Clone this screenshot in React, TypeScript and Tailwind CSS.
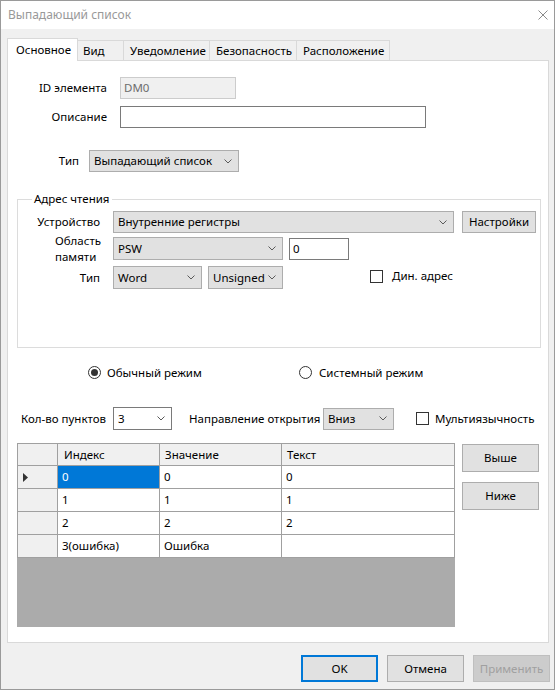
import type { ReactNode } from 'react';

function Chevron() {
  return (
    <svg width="8" height="5" viewBox="0 0 8 5" className="shrink-0">
      <path d="M0.5 0.5L4 4L7.5 0.5" fill="none" stroke="#5a5a5a" strokeWidth="1" />
    </svg>
  );
}

interface SelectProps {
  text: string;
  className: string;
  white?: boolean;
}

function Select({ text, className, white }: SelectProps) {
  return (
    <div
      className={`flex items-center justify-between pl-[4px] pr-[6px] border ${
        white ? 'bg-white border-[#7a7a7a]' : 'bg-[#e1e1e1] border-[#adadad]'
      } ${className}`}
    >
      <span className="whitespace-nowrap">{text}</span>
      <Chevron />
    </div>
  );
}

function Button({ children, className }: { children: ReactNode; className: string }) {
  return (
    <div className={`flex items-center justify-center border border-[#adadad] bg-[#e1e1e1] ${className}`}>
      {children}
    </div>
  );
}

function Checkbox() {
  return <div className="w-[13px] h-[13px] border border-[#333] bg-white shrink-0" />;
}

function Radio({ checked }: { checked?: boolean }) {
  return (
    <div className="w-[13px] h-[13px] rounded-full border border-[#333] bg-white flex items-center justify-center shrink-0">
      {checked && <div className="w-[7px] h-[7px] rounded-full bg-[#333]" />}
    </div>
  );
}

const rows = [
  { idx: '0', val: '0', txt: '0' },
  { idx: '1', val: '1', txt: '1' },
  { idx: '2', val: '2', txt: '2' },
  { idx: '3(ошибка)', val: 'Ошибка', txt: '' },
];

const tabs = [
  { name: 'Вид', w: 'w-[46px]', pl: 'pl-[5px]' },
  { name: 'Уведомление', w: 'w-[86px]', pl: 'pl-[6px]' },
  { name: 'Безопасность', w: 'w-[87px]', pl: 'pl-[6px]' },
  { name: 'Расположение', w: 'w-[93px]', pl: 'pl-[6px]' },
];

export default function App() {
  return (
    <div className="w-[558px] h-[690px] bg-white font-['Noto_Sans',sans-serif] text-[11.5px] text-black leading-none whitespace-nowrap">
      <div className="w-[555px] h-[690px] border border-[#9a9a9a] flex flex-col">
        {/* title bar */}
        <div className="h-[28px] bg-white flex items-center justify-between pl-[7px] pr-[6px] shrink-0">
          <span className="text-[#999] text-[12px]">Выпадающий список</span>
          <svg width="10" height="10" viewBox="0 0 10 10">
            <path d="M0.5 0.5L9.5 9.5M9.5 0.5L0.5 9.5" stroke="#8a8a8a" strokeWidth="1" />
          </svg>
        </div>

        <div className="flex-1 bg-[#f0f0f0] pl-[6px] pt-[9px] flex flex-col">
          {/* tabs */}
          <div className="h-[22px] flex items-end">
            <div className="relative z-10 -mb-px h-[23px] w-[71px] bg-white border border-b-0 border-[#d9d9d9] flex items-center pl-[8px]">
              Основное
            </div>
            {tabs.map((t) => (
              <div
                key={t.name}
                className={`h-[20px] ${t.w} ${t.pl} border-t border-r border-[#d9d9d9] bg-[#f0f0f0] flex items-center`}
              >
                {t.name}
              </div>
            ))}
          </div>

          {/* panel */}
          <div className="w-[542px] h-[583px] bg-white border border-[#d9d9d9] flex flex-col">
            <div className="flex items-center mt-[16px] h-[22px]">
              <div className="w-[99px] text-right">ID элемента</div>
              <div className="ml-[13px] w-[116px] h-[22px] bg-[#f0f0f0] border border-[#cccccc] flex items-center pl-[3px] text-[#6d6d6d]">
                DM0
              </div>
            </div>
            <div className="flex items-center mt-[7px] h-[22px]">
              <div className="w-[99px] text-right">Описание</div>
              <div className="ml-[13px] w-[306px] h-[22px] bg-white border border-[#7a7a7a]" />
            </div>
            <div className="flex items-center mt-[22px] h-[22px]">
              <div className="w-[71px] text-right">Тип</div>
              <Select text="Выпадающий список" className="ml-[10px] w-[150px] h-[22px]" />
            </div>

            {/* group box */}
            <div className="relative ml-[9px] mt-[27px] w-[524px] h-[149px] border border-[#dcdcdc] flex flex-col">
              <span className="absolute left-[14px] -top-[7px] bg-white px-[2px]">Адрес чтения</span>
              <div className="flex items-center mt-[11px] h-[22px]">
                <div className="w-[82px] text-right">Устройство</div>
                <Select text="Внутренние регистры" className="ml-[13px] w-[341px] h-[22px]" />
                <Button className="ml-[8px] w-[74px] h-[22px]">Настройки</Button>
              </div>
              <div className="flex items-center mt-[4px] h-[23px]">
                <div className="w-[82px] pl-[37px] leading-[16px]">
                  Область
                  <br />
                  памяти
                </div>
                <Select text="PSW" className="ml-[13px] w-[170px] h-[23px]" />
                <div className="ml-[6px] w-[60px] h-[22px] bg-white border border-[#7a7a7a] flex items-center pl-[3px]">
                  0
                </div>
              </div>
              <div className="flex items-center mt-[6px] h-[23px]">
                <div className="w-[82px] text-right">Тип</div>
                <Select text="Word" className="ml-[13px] w-[89px] h-[23px]" />
                <Select text="Unsigned" className="ml-[6px] w-[75px] h-[23px]" />
                <div className="ml-[87px] mb-[2px]">
                  <Checkbox />
                </div>
                <span className="ml-[9px] mb-[3px]">Дин. адрес</span>
              </div>
            </div>

            {/* mode radios */}
            <div className="flex items-center mt-[16px] h-[17px]">
              <div className="ml-[80px] w-[211px] flex items-center">
                <Radio checked />
                <span className="ml-[6px]">Обычный режим</span>
              </div>
              <Radio />
              <span className="ml-[7px]">Системный режим</span>
            </div>

            {/* count row */}
            <div className="flex items-center mt-[26px] h-[23px]">
              <div className="ml-[13px] w-[92px]">Кол-во пунктов</div>
              <Select text="3" white className="w-[59px] h-[23px] pl-[3px]" />
              <div className="ml-[17px] w-[134px]">Направление открытия</div>
              <Select text="Вниз" className="w-[71px] h-[22px]" />
              <div className="ml-[22px]">
                <Checkbox />
              </div>
              <span className="ml-[6px]">Мультиязычность</span>
            </div>

            {/* table + side buttons */}
            <div className="flex mt-[13px]">
              <div className="ml-[9px] w-[438px] h-[184px] bg-[#ababab] flex flex-col">
                <div className="flex h-[23px] bg-[#f0f0f0] border-t border-l border-[#a0a0a0]">
                  <div className="w-[40px] border-r border-b border-[#a0a0a0]" />
                  <div className="w-[102px] border-r border-b border-[#a0a0a0] flex items-center pl-[6px]">Индекс</div>
                  <div className="w-[122px] border-r border-b border-[#a0a0a0] flex items-center pl-[5px]">Значение</div>
                  <div className="w-[173px] border-r border-b border-[#a0a0a0] flex items-center pl-[5px]">Текст</div>
                </div>
                {rows.map((r, i) => (
                  <div key={i} className="flex h-[23px] bg-white border-l border-[#a0a0a0]">
                    <div className="w-[40px] bg-[#f0f0f0] border-r border-b border-[#a0a0a0] flex items-center pl-[5px]">
                      {i === 0 && (
                        <svg width="5" height="9" viewBox="0 0 5 9">
                          <path d="M0 0L5 4.5L0 9Z" fill="#333" />
                        </svg>
                      )}
                    </div>
                    <div
                      className={`w-[102px] border-r border-b border-[#a0a0a0] flex items-center pl-[4px] ${
                        i === 0 ? 'bg-[#0078d7] text-white' : ''
                      }`}
                    >
                      {r.idx}
                    </div>
                    <div className="w-[122px] border-r border-b border-[#a0a0a0] flex items-center pl-[4px]">{r.val}</div>
                    <div className="w-[173px] border-r border-b border-[#a0a0a0] flex items-center pl-[4px]">{r.txt}</div>
                  </div>
                ))}
              </div>
              <div className="ml-[7px] mt-[1px] flex flex-col gap-[10px]">
                <Button className="w-[77px] h-[28px]">Выше</Button>
                <Button className="w-[77px] h-[28px]">Ниже</Button>
              </div>
            </div>
          </div>

          {/* dialog buttons */}
          <div className="flex justify-end gap-[9px] mt-[12px] pr-[4px]">
            <div className="w-[77px] h-[27px] flex items-center justify-center border-2 border-[#0078d7] bg-[#e1e1e1]">
              OK
            </div>
            <Button className="w-[77px] h-[27px]">Отмена</Button>
            <div className="w-[77px] h-[27px] flex items-center justify-center border border-[#bfbfbf] bg-[#cccccc] text-[#a0a0a0]">
              Применить
            </div>
          </div>
        </div>
      </div>
    </div>
  );
}
